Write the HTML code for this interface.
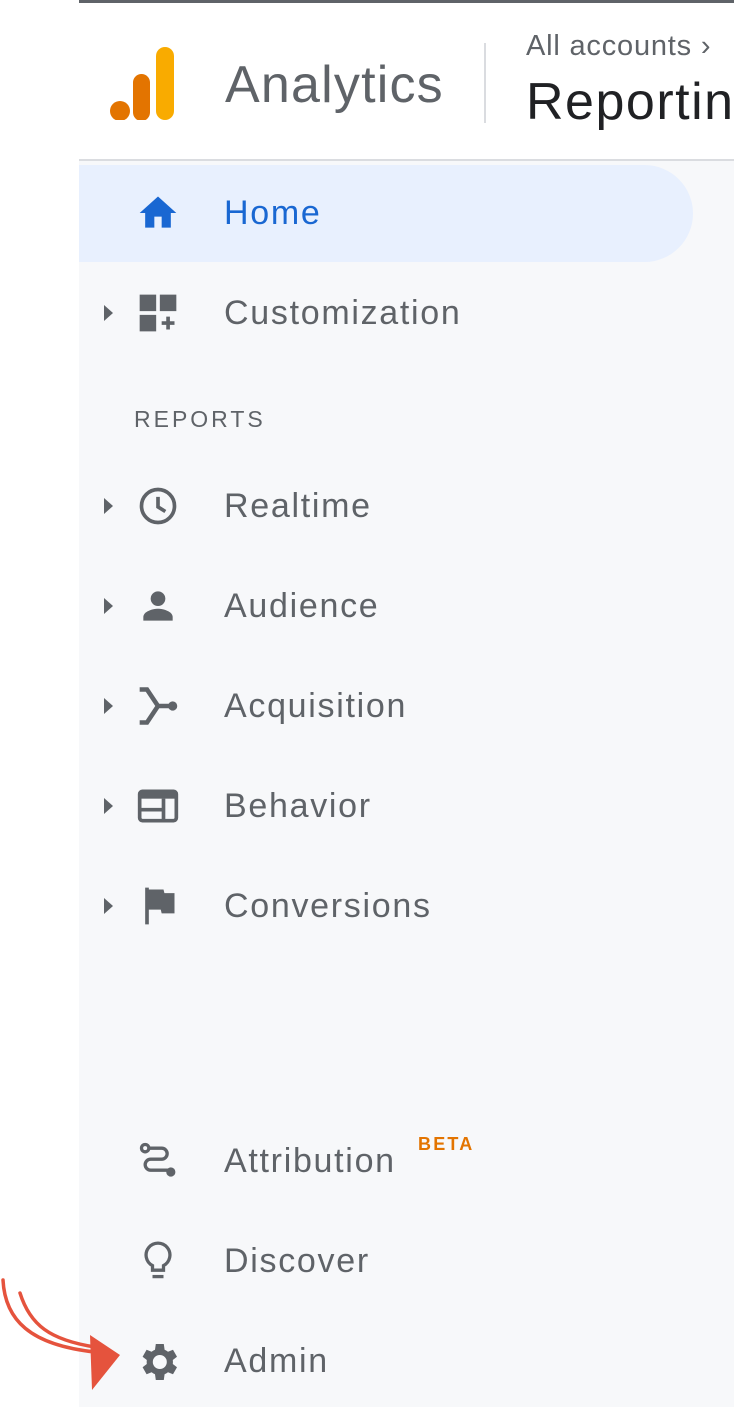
<!DOCTYPE html>
<html><head><style>
body{margin:0;width:734px;height:1407px;background:#fff;position:relative;overflow:hidden;font-family:"Liberation Sans",sans-serif}
.side{position:absolute;left:79px;top:0;width:655px;height:1407px;background:#f7f8fa}
.hdr{position:absolute;left:79px;top:0;width:655px;height:161px;background:#fff;border-bottom:2px solid #dadce0;border-top:3px solid #5f6368;box-sizing:border-box}
.t{position:absolute;left:224px;font-size:34px;color:#5f6368;line-height:40px;letter-spacing:1.7px;white-space:nowrap}
.ic{position:absolute;left:136px;width:44px;height:44px}
.car{position:absolute;left:104px;width:0;height:0;border-top:8px solid transparent;border-bottom:8px solid transparent;border-left:9px solid #5f6368}
</style></head><body>
<div class="side"></div>
<div class="hdr"></div>
<svg style="position:absolute;left:110px;top:45px" width="66" height="75"><rect x="0" y="56" width="20" height="20" rx="10" fill="#e37400"/><rect x="23" y="29" width="17" height="47" rx="8.5" fill="#e37400"/><rect x="46" y="2" width="18" height="73" rx="9" fill="#f9ab00"/></svg>
<div style="position:absolute;left:225px;top:55px;font-size:52px;color:#5f6368;letter-spacing:1.2px">Analytics</div>
<div style="position:absolute;left:484px;top:43px;width:2px;height:80px;background:#dadce0"></div>
<div style="position:absolute;left:526px;top:30px;font-size:29px;color:#5f6368;letter-spacing:0.8px">All accounts &#8250;</div>
<div style="position:absolute;left:526px;top:72px;font-size:52px;color:#202124;white-space:nowrap;letter-spacing:1.5px">Reporting</div>
<div style="position:absolute;left:79px;top:165px;width:614px;height:97px;background:#e8f0fe;border-radius:0 49px 49px 0"></div>
<svg class="ic" style="top:191px" viewBox="0 0 24 24"><path d="M10 20v-6h4v6h5v-8h3L12 3 2 12h3v8z" fill="#1967d2"/></svg>
<div class="t" style="top:193px;color:#1967d2">Home</div>
<div class="car" style="top:305px"></div>
<svg class="ic" style="top:291px" viewBox="0 0 24 24"><path d="M2 2h9v9H2zM13 2h9v9h-9zM2 13h9v9H2z" fill="#5f6368"/><path d="M17.5 14v7M14 17.5h7" stroke="#5f6368" stroke-width="2"/></svg>
<div class="t" style="top:293px">Customization</div>
<div style="position:absolute;left:134px;top:406px;font-size:23px;letter-spacing:3px;color:#5f6368">REPORTS</div>
<div class="car" style="top:498px"></div>
<svg class="ic" style="top:484px" viewBox="0 0 24 24"><circle cx="12" cy="12" r="9" fill="none" stroke="#5f6368" stroke-width="2"/><path d="M12 7v5.5l4 2.5" fill="none" stroke="#5f6368" stroke-width="2"/></svg>
<div class="t" style="top:486px">Realtime</div>
<div class="car" style="top:598px"></div>
<svg class="ic" style="top:584px" viewBox="0 0 24 24"><circle cx="12" cy="8" r="4" fill="#5f6368"/><path d="M4 20v-2c0-3 5-4.5 8-4.5s8 1.5 8 4.5v2z" fill="#5f6368"/></svg>
<div class="t" style="top:586px">Audience</div>
<div class="car" style="top:698px"></div>
<svg class="ic" style="top:684px" viewBox="0 0 24 24"><path d="M2 3h4l6 9H20M2 21h4l6-9" fill="none" stroke="#5f6368" stroke-width="2.5"/><circle cx="20" cy="12" r="2.5" fill="#5f6368"/></svg>
<div class="t" style="top:686px">Acquisition</div>
<div class="car" style="top:798px"></div>
<svg class="ic" style="top:784px" viewBox="0 0 24 24"><rect x="2" y="4" width="20" height="16" rx="1.5" fill="none" stroke="#5f6368" stroke-width="2"/><rect x="2" y="4" width="20" height="4" fill="#5f6368"/><path d="M15 8v12M3 14h12" stroke="#5f6368" stroke-width="2"/></svg>
<div class="t" style="top:786px">Behavior</div>
<div class="car" style="top:898px"></div>
<svg class="ic" style="top:884px" viewBox="0 0 24 24"><path d="M5 2h2v20H5zM7 3h8l.5 2H21v11h-7l-.5-2H7z" fill="#5f6368"/></svg>
<div class="t" style="top:886px">Conversions</div>
<svg class="ic" style="top:1139px" viewBox="0 0 24 24"><circle cx="5" cy="5" r="2" fill="none" stroke="#5f6368" stroke-width="1.8"/><path d="M7 5h7a3 3 0 0 1 0 6H8a3 3 0 0 0 0 6h10" fill="none" stroke="#5f6368" stroke-width="1.8"/><circle cx="19" cy="18" r="2.5" fill="#5f6368"/></svg>
<div class="t" style="top:1141px">Attribution</div>
<div style="position:absolute;left:418px;top:1134px;font-size:18px;font-weight:bold;color:#e37400;letter-spacing:2.2px">BETA</div>
<svg class="ic" style="top:1239px" viewBox="0 0 24 24"><path d="M9 17v-2.5A6.5 6.5 0 1 1 15 14.5V17z" fill="none" stroke="#5f6368" stroke-width="1.8"/><path d="M9 20.5h6" stroke="#5f6368" stroke-width="1.8"/></svg>
<div class="t" style="top:1241px">Discover</div>
<svg class="ic" style="top:1338px;left:134px;width:48px;height:48px" viewBox="0 0 24 24"><path fill="#5f6368" d="M19.4 13a7.5 7.5 0 0 0 0-2l2.1-1.6-2-3.5-2.5 1a7.4 7.4 0 0 0-1.7-1L14.9 3h-4l-.4 2.9a7.4 7.4 0 0 0-1.7 1l-2.5-1-2 3.5L6.4 11a7.5 7.5 0 0 0 0 2l-2.1 1.6 2 3.5 2.5-1a7.4 7.4 0 0 0 1.7 1l.4 2.9h4l.4-2.9a7.4 7.4 0 0 0 1.7-1l2.5 1 2-3.5zM12.9 15.5a3.5 3.5 0 1 1 0-7 3.5 3.5 0 0 1 0 7z"/></svg>
<div class="t" style="top:1341px">Admin</div>
<svg style="position:absolute;left:0;top:1270px" width="125" height="125"><path d="M3 10C5 50 30 75 95 82M20 23C30 55 50 70 95 77" fill="none" stroke="#e5533d" stroke-width="3.5" stroke-linecap="round"/><path d="M90 65L120 85 92 120z" fill="#e5533d"/></svg>
</body></html>
